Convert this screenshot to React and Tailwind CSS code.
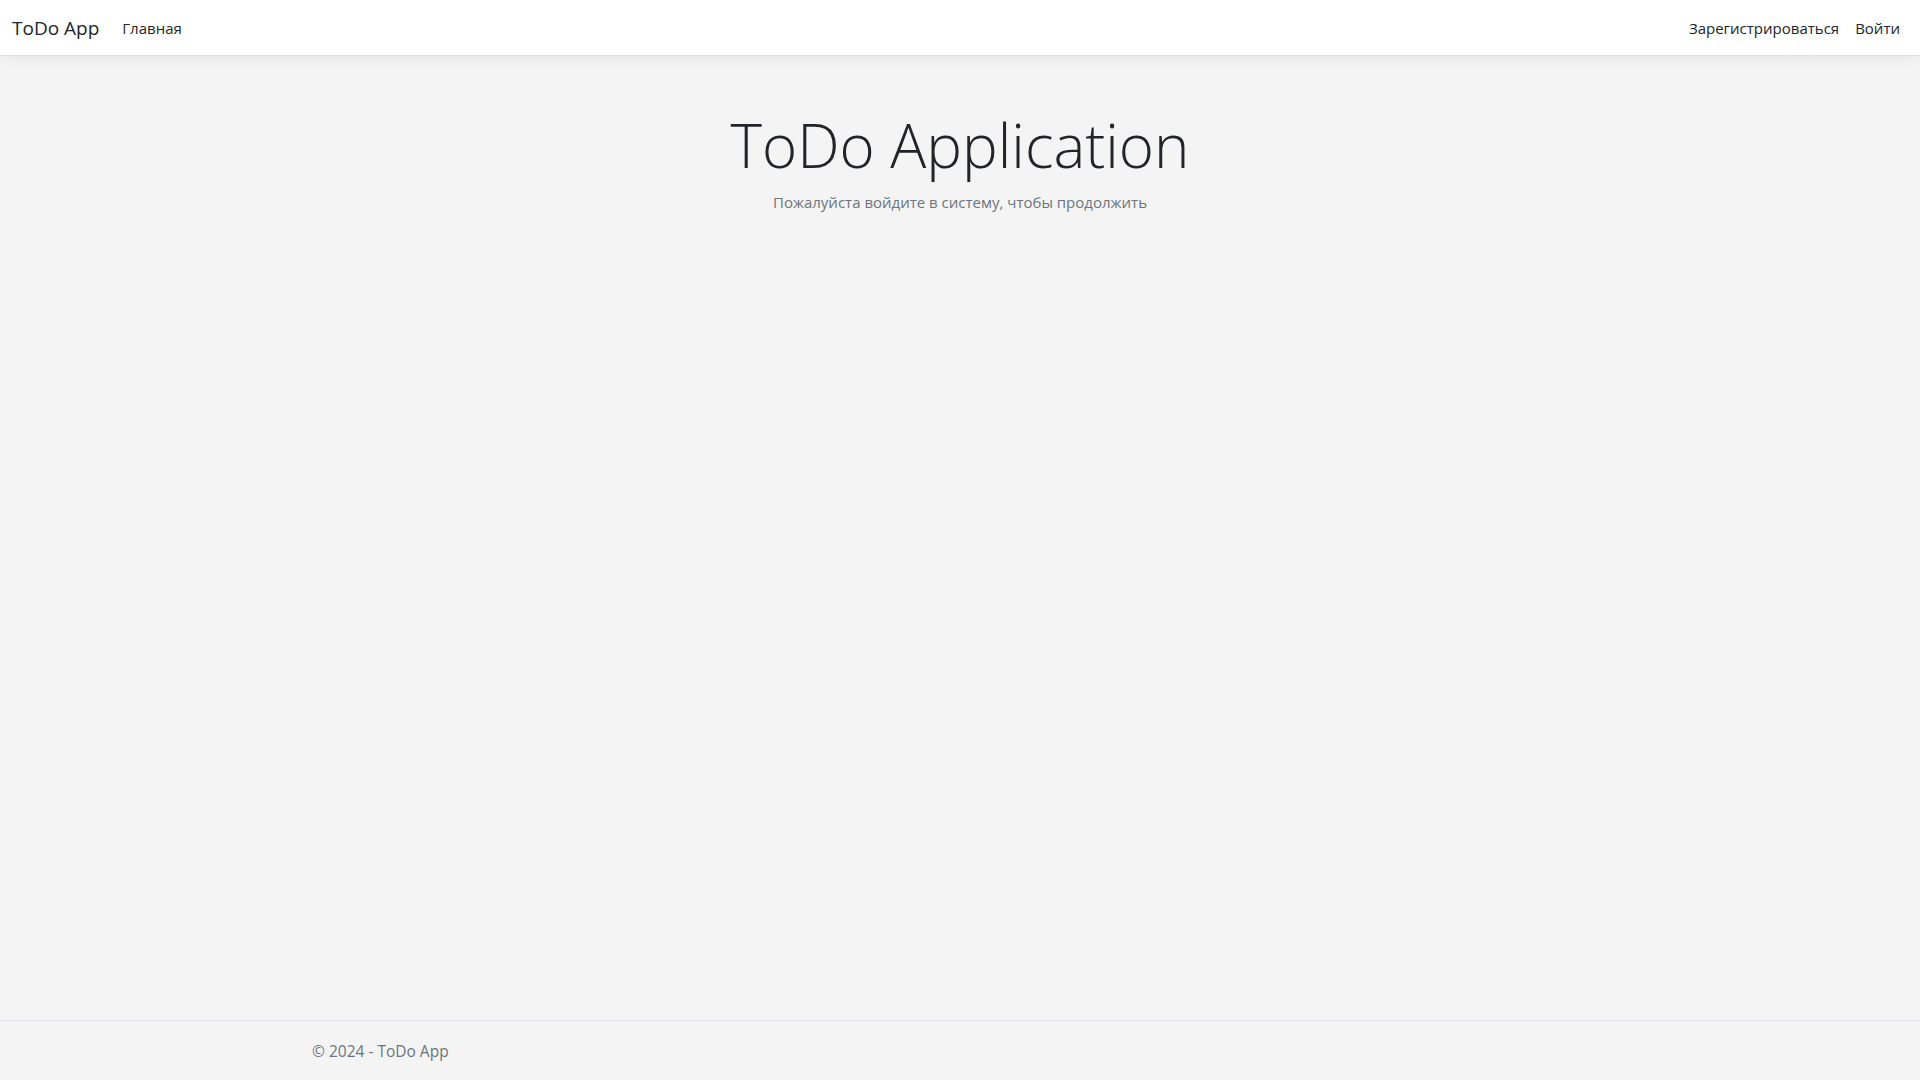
const font = { fontFamily: '"Open Sans", "Noto Sans", sans-serif' };

const NavLink = ({ children }) => (
    <a href="#" className="px-2 py-2 text-[15px] leading-6 text-[#212529]">{children}</a>
);

const App = () => {
    return (
        <div style={font} className="min-h-screen h-screen flex flex-col bg-[#f4f4f4] text-[#212529]">
            <header className="h-[56px] shrink-0 bg-white border-b border-[#dee2e6] shadow-[0_4px_12px_rgba(0,0,0,0.05)] flex items-center px-3 relative z-10">
                <a href="#" className="text-[19px] leading-[30px] text-[#212529] mr-[15px]">ToDo App</a>
                <nav className="flex items-center">
                    <NavLink>Главная</NavLink>
                </nav>
                <nav className="flex items-center ml-auto">
                    <NavLink>Зарегистрироваться</NavLink>
                    <NavLink>Войти</NavLink>
                </nav>
            </header>

            <main className="flex-1 pt-[53px]">
                <div className="text-center">
                    <h1 className="text-[60px] font-light leading-[1.2] mb-[10px]">ToDo Application</h1>
                    <p className="text-[15px] text-[#6c757d]">Пожалуйста войдите в систему, чтобы продолжить</p>
                </div>
            </main>

            <footer className="h-[60px] shrink-0 border-t border-[#dee2e6]">
                <div className="max-w-[1320px] mx-auto px-3 leading-[60px] text-[15.5px] text-[#6c757d]">
                    © 2024 - ToDo App
                </div>
            </footer>
        </div>
    );
};

export default App;
